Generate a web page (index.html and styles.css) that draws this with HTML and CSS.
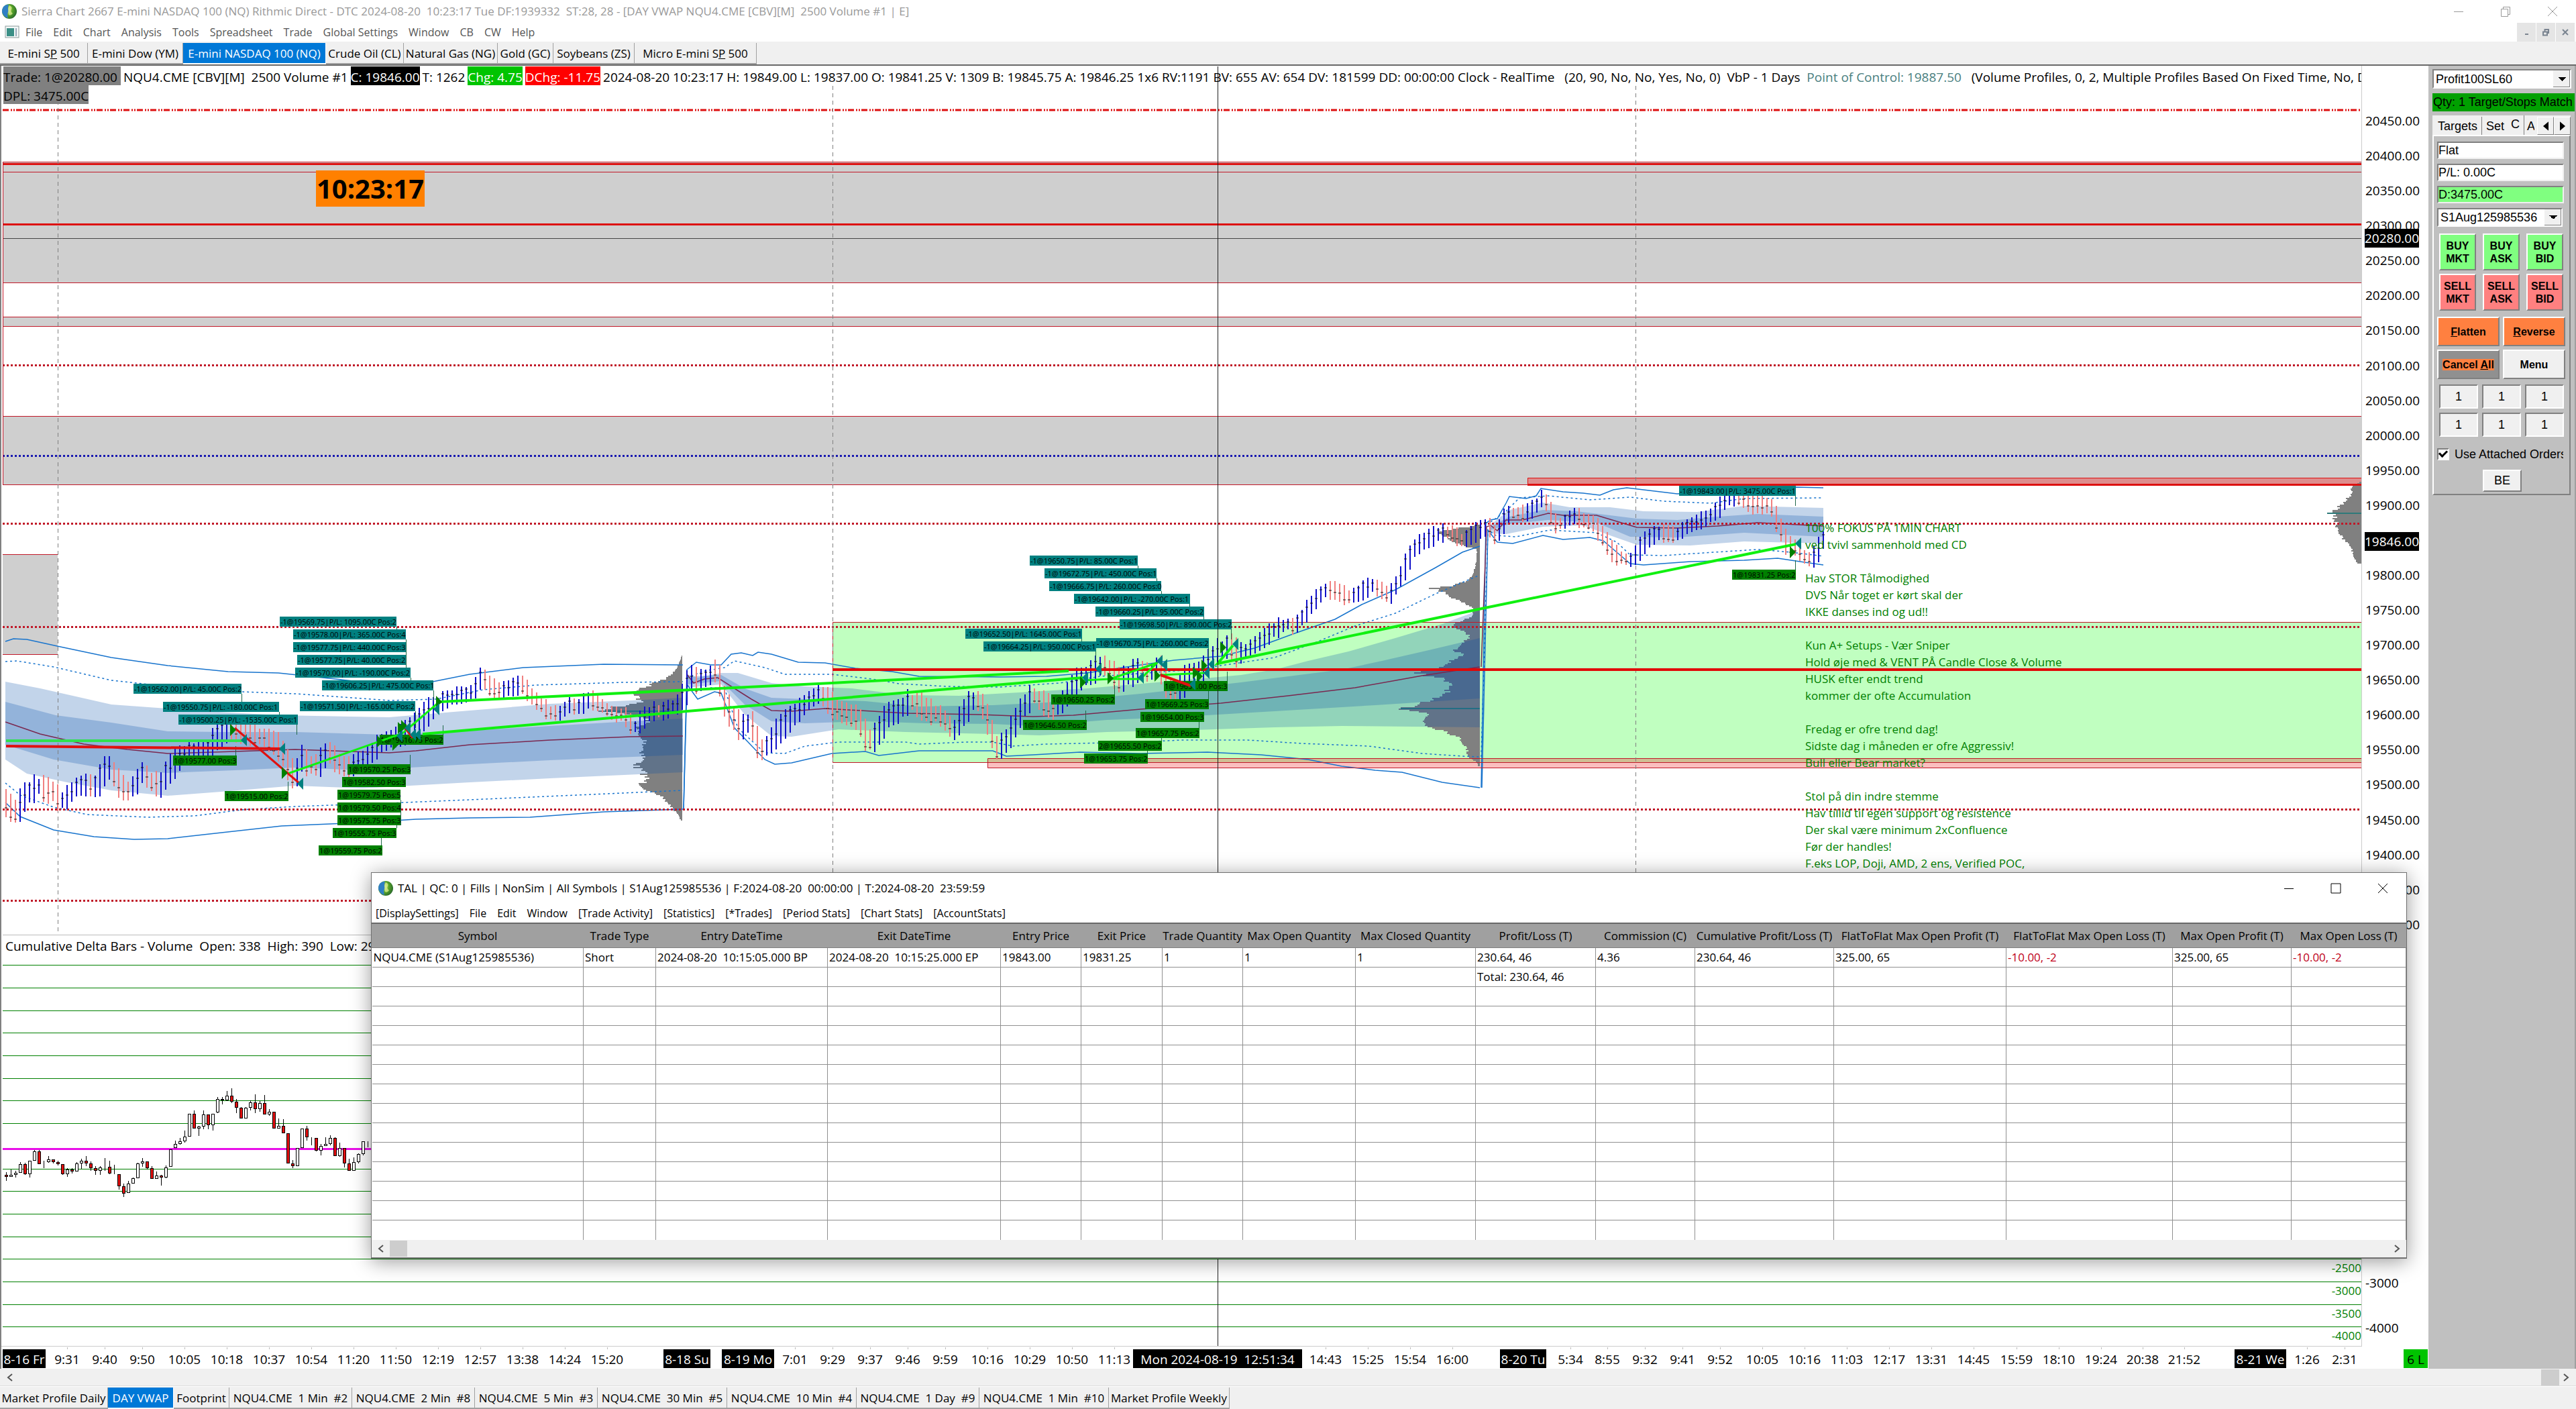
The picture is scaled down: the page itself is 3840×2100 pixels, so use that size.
FILE: index.html
```html
<!DOCTYPE html>
<html lang="en">
<head>
<meta charset="utf-8">
<title>Sierra Chart - DAY VWAP NQU4.CME</title>
<link rel="stylesheet" href="styles.css">
</head>
<body>
<svg class="defs" aria-hidden="true">
  <defs>
    <radialGradient id="ball" cx="35%" cy="40%" r="75%">
      <stop offset="0" stop-color="#d8ee7a"/><stop offset=".5" stop-color="#58a428"/><stop offset="1" stop-color="#1c5a2c"/>
    </radialGradient>
    <symbol id="globe" viewBox="0 0 24 24">
      <circle cx="12" cy="12" r="11" fill="url(#ball)"/>
      <path d="M3 5 Q8 1 11 2 Q9 7 11 11 Q8 16 10 22 Q3 20 1 13 Q1 8 3 5Z" fill="#2f7fc4"/>
      <path d="M12 3 Q17 5 15 9 Q13 12 17 15 Q14 19 11 17 Q9 9 12 3Z" fill="#e6f29a" opacity=".7"/>
    </symbol>
  </defs>
</svg>

<header class="titlebar">
  <svg class="logo"><use href="#globe"/></svg>
  <h1 class="title">Sierra Chart 2667 E-mini NASDAQ 100 (NQ) Rithmic Direct - DTC 2024-08-20  10:23:17 Tue DF:1939332  ST:28, 28 - [DAY VWAP NQU4.CME [CBV][M]  2500 Volume #1 | E]</h1>
  <div class="winbtns faded">
    <button aria-label="Minimize"><svg viewBox="0 0 16 16"><path d="M1 8.5H15"/></svg></button>
    <button aria-label="Restore"><svg viewBox="0 0 16 16"><path d="M1.5 4.5H11.5V15.5H1.5ZM4.5 4V1.5H14.5V12.5H12"/></svg></button>
    <button aria-label="Close"><svg viewBox="0 0 16 16"><path d="M1 1L15 15M15 1L1 15"/></svg></button>
  </div>
</header>

<nav class="menubar">
  <svg class="docicon" viewBox="0 0 22 20"><rect x="1" y="1" width="20" height="17" fill="#f4f8f8" stroke="#8a9a9a"/><rect x="3" y="4" width="11" height="12" fill="#3b8f86"/><path d="M17 4V16" stroke="#9ab" stroke-width="2"/></svg>
  <div class="menu">
    <button>File</button><button>Edit</button><button>Chart</button><button>Analysis</button><button>Tools</button><button>Spreadsheet</button><button>Trade</button><button>Global Settings</button><button>Window</button><button>CB</button><button>CW</button><button>Help</button>
  </div>
  <div class="mdibtns">
    <button aria-label="Minimize chart"><svg viewBox="0 0 12 12"><path d="M4 9H9"/></svg></button>
    <button aria-label="Restore chart"><svg viewBox="0 0 12 12"><path d="M2 5.500H8V10.500H2ZM4.500 5V2H10V7H8"/></svg></button>
    <button aria-label="Close chart"><svg viewBox="0 0 12 12"><path d="M2 2L10 10M10 2L2 10"/></svg></button>
  </div>
</nav>

<nav class="tabs top">
  <button class="w131">E-mini S<u>P</u> 500</button><button class="w142">E-mini Dow (YM)</button><button class="w213 on">E-mini NASDAQ 100 (NQ)</button><button class="w116">Crude Oil (CL)</button><button class="w140">Natural Gas (NG)</button><button class="w83">Gold (GC)</button><button class="w121">Soybeans (ZS)</button><button class="w182">Micro E-mini S<u>P</u> 500</button>
</nav>

<main class="work">
  <section class="chart">
    <div class="plot">
      <svg id="plot" class="canvas"></svg>
      <div class="quote">
        <span class="tag grey">Trade: 1@20280.00 </span><span>NQU4.CME [CBV][M]  2500 Volume #1</span><span class="tag black">C: 19846.00</span><span>T: 1262</span><span class="tag green">Chg: 4.75</span><span class="tag red">DChg: -11.75</span><span>2024-08-20 10:23:17 H: 19849.00 L: 19837.00 O: 19841.25 V: 1309 B: 19845.75 A: 19846.25 1x6 RV:1191 BV: 655 AV: 654 DV: 181599 DD: 00:00:00 Clock - RealTime   (20, 90, No, No, Yes, No, 0)  VbP - 1 Days  <span class="poc">Point of Control: 19887.50</span>   (Volume Profiles, 0, 2, Multiple Profiles Based On Fixed Time, No, Days)</span>
      </div>
      <div class="quote"><span class="tag grey">DPL: 3475.00C</span></div>
      <time class="clock">10:23:17</time>
      <p class="notes">100% FOKUS PÅ 1MIN CHART
ved tvivl sammenhold med CD

Hav STOR Tålmodighed
DVS Når toget er kørt skal der
IKKE danses ind og ud!!

Kun A+ Setups - Vær Sniper
Hold øje med &amp; VENT PÅ Candle Close &amp; Volume
HUSK efter endt trend
kommer der ofte Accumulation

Fredag er ofre trend dag!
Sidste dag i måneden er ofre Aggressiv!
Bull eller Bear market?

Stol på din indre stemme
Hav tillid til egen support og resistence
Der skal være minimum 2xConfluence
Før der handles!
F.eks LOP, Doji, AMD, 2 ens, Verified POC,</p>
      <p class="study">Cumulative Delta Bars - Volume  Open: 338  High: 390  Low: 296</p>
    </div>
    <div class="axis">
      <ul class="prices"><li>20450.00</li><li>20400.00</li><li>20350.00</li><li>20300.00</li><li>20250.00</li><li>20200.00</li><li>20150.00</li><li>20100.00</li><li>20050.00</li><li>20000.00</li><li>19950.00</li><li>19900.00</li><li>19850.00</li><li>19800.00</li><li>19750.00</li><li>19700.00</li><li>19650.00</li><li>19600.00</li><li>19550.00</li><li>19500.00</li><li>19450.00</li><li>19400.00</li><li>19350.00</li><li>19300.00</li></ul>
      <ul class="deltas"><li>-3000</li><li>-4000</li></ul>
      <span class="mark cursor">20280.00</span>
      <span class="mark last">19846.00</span>
    </div>
    <svg id="times" class="times"></svg>
  </section>

  <aside class="panel">
    <select class="combo" aria-label="Trade configuration"><option>Profit100SL60</option></select>
    <div class="match">Qty: 1 Target/Stops Match</div>
    <div class="ptabs">
      <button>Targets</button><button>Set</button><button class="on">C</button><button class="cut">A</button><button class="arrow" aria-label="Previous"><svg viewBox="0 0 10 12"><path d="M8 1V11L2 6Z"/></svg></button><button class="arrow" aria-label="Next"><svg viewBox="0 0 10 12"><path d="M2 1V11L8 6Z"/></svg></button>
    </div>
    <form class="ticket">
      <input class="field" aria-label="Position" value="Flat">
      <input class="field" aria-label="Profit or loss" value="P/L: 0.00C">
      <input class="field day" aria-label="Daily profit or loss" value="D:3475.00C">
      <select class="combo" aria-label="Account"><option>S1Aug125985536</option></select>
      <div class="three orders">
        <button type="button" class="buy">BUY<br>MKT</button><button type="button" class="buy">BUY<br>ASK</button><button type="button" class="buy">BUY<br>BID</button>
        <button type="button" class="sell">SELL<br>MKT</button><button type="button" class="sell">SELL<br>ASK</button><button type="button" class="sell">SELL<br>BID</button>
      </div>
      <div class="two">
        <button type="button" class="orange"><span><u>F</u>latten</span></button><button type="button" class="orange"><span><u>R</u>everse</span></button>
        <button type="button" class="cancel"><span>Cancel <u>A</u>ll</span></button><button type="button">Menu</button>
      </div>
      <div class="three qty">
        <input aria-label="Quantity 1" value="1"><input aria-label="Quantity 2" value="1"><input aria-label="Quantity 3" value="1">
        <input aria-label="Quantity 4" value="1"><input aria-label="Quantity 5" value="1"><input aria-label="Quantity 6" value="1">
      </div>
      <label class="attach"><input type="checkbox" checked>Use Attached Orders</label>
      <button type="button" class="be">BE</button>
    </form>
  </aside>
</main>

<div class="hscroll"><svg viewBox="0 0 12 14"><path d="M9 2L3 7L9 12"/></svg><i class="thumb"></i><svg viewBox="0 0 12 14"><path d="M3 2L9 7L3 12"/></svg></div>

<nav class="tabs bottom">
  <button class="w161">Market Profile Daily</button><button class="w98 on">DAY VWAP</button><button class="w83">Footprint</button><button class="w183">NQU4.CME  1 Min  #2</button><button class="w183">NQU4.CME  2 Min  #8</button><button class="w183">NQU4.CME  5 Min  #3</button><button class="w193">NQU4.CME  30 Min  #5</button><button class="w193">NQU4.CME  10 Min  #4</button><button class="w183">NQU4.CME  1 Day  #9</button><button class="w193">NQU4.CME  1 Min  #10</button><button class="w180">Market Profile Weekly</button>
</nav>

<section class="dialog" role="dialog" aria-label="Trade Activity Log">
  <header class="dtitle">
    <svg class="logo"><use href="#globe"/></svg>
    <h2 class="title">TAL | QC: 0 | Fills | NonSim | All Symbols | S1Aug125985536 | F:2024-08-20  00:00:00 | T:2024-08-20  23:59:59</h2>
    <div class="winbtns">
      <button aria-label="Minimize log"><svg viewBox="0 0 16 16"><path d="M1 8.500H15"/></svg></button>
      <button aria-label="Maximize log"><svg viewBox="0 0 16 16"><path d="M1 1H15V15H1Z"/></svg></button>
      <button aria-label="Close log"><svg viewBox="0 0 16 16"><path d="M1 1L15 15M15 1L1 15"/></svg></button>
    </div>
  </header>
  <nav class="menu dmenu">
    <button>[DisplaySettings]</button><button>File</button><button>Edit</button><button>Window</button><button>[Trade Activity]</button><button>[Statistics]</button><button>[*Trades]</button><button>[Period Stats]</button><button>[Chart Stats]</button><button>[AccountStats]</button>
  </nav>
  <table class="log">
    <colgroup><col class="c315"><col class="c108"><col class="c256"><col class="c258"><col class="c120"><col class="c121"><col class="c120"><col class="c168"><col class="c179"><col class="c179"><col class="c148"><col class="c207"><col class="c257"><col class="c248"><col class="c177"><col></colgroup>
    <thead><tr><th>Symbol</th><th>Trade Type</th><th>Entry DateTime</th><th>Exit DateTime</th><th>Entry Price</th><th>Exit Price</th><th>Trade Quantity</th><th>Max Open Quantity</th><th>Max Closed Quantity</th><th>Profit/Loss (T)</th><th>Commission (C)</th><th>Cumulative Profit/Loss (T)</th><th>FlatToFlat Max Open Profit (T)</th><th>FlatToFlat Max Open Loss (T)</th><th>Max Open Profit (T)</th><th>Max Open Loss (T)</th></tr></thead>
    <tbody id="rows">
      <tr><td>NQU4.CME (S1Aug125985536)</td><td>Short</td><td>2024-08-20  10:15:05.000 BP</td><td>2024-08-20  10:15:25.000 EP</td><td>19843.00</td><td>19831.25</td><td>1</td><td>1</td><td>1</td><td>230.64, 46</td><td>4.36</td><td>230.64, 46</td><td>325.00, 65</td><td class="neg">-10.00, -2</td><td>325.00, 65</td><td class="neg">-10.00, -2</td></tr>
      <tr><td></td><td></td><td></td><td></td><td></td><td></td><td></td><td></td><td></td><td>Total: 230.64, 46</td><td></td><td></td><td></td><td></td><td></td><td></td></tr>
    </tbody>
  </table>
  <div class="dscroll"><svg viewBox="0 0 12 14"><path d="M9 2L3 7L9 12"/></svg><i class="thumb"></i><svg class="end" viewBox="0 0 12 14"><path d="M3 2L9 7L3 12"/></svg></div>
</section>
<script src="chart.js"></script>
</body>
</html>
```
FILE: styles.css
```css
* { box-sizing: border-box; }
body {
  margin: 0; height: 100vh; position: relative; overflow: hidden;
  display: flex; flex-direction: column; background: #f0f0f0; color: #000;
  font: 17px/24px "Open Sans", "Noto Sans", sans-serif;
}
button, input, select { font: inherit; color: inherit; margin: 0; padding: 0; border: 0; background: none; border-radius: 0; }
h1, h2, p, ul { margin: 0; padding: 0; font-size: inherit; font-weight: 400; list-style: none; }
.defs { position: absolute; width: 0; height: 0; }
.logo { width: 24px; height: 24px; }
.title { white-space: pre; flex: 1; }

.titlebar { height: 34px; background: #fff; display: flex; align-items: center; gap: 6px; padding-left: 2px; color: #999; }
.winbtns { display: flex; }
.winbtns button { width: 70px; height: 30px; display: grid; place-items: center; }
.winbtns svg { width: 16px; height: 16px; fill: none; stroke: #000; stroke-width: 1; }
.faded svg { stroke: #999; }
.menubar { height: 28px; background: #fff; display: flex; align-items: center; gap: 9px; padding-left: 7px; color: #555; }
.docicon { width: 22px; height: 20px; }
.menu { display: flex; gap: 16px; white-space: nowrap; flex: 1; font-size: 16px; line-height: 26px; }
.mdibtns { display: flex; gap: 1px; padding-right: 2px; }
.mdibtns button { width: 28px; height: 28px; background: #e5e5e5; display: grid; place-items: center; }
.mdibtns svg { width: 12px; height: 12px; fill: none; stroke: #7a8490; stroke-width: 2; }

.tabs { display: flex; background: #f0f0f0; }
.tabs button { white-space: pre; text-align: center; border-right: 1px solid #a0a0a0; border-bottom: 2px solid #a0a0a0; padding-top: 2px; overflow: hidden; }
.tabs .on { background: #0078d7; color: #fff; border-color: #fff; }
.top { height: 36px; padding-top: 2px; border-bottom: 2px solid #696969; }
.bottom { height: 34px; padding-top: 1px; border-top: 1px solid #fff; }
.w83 { width: 83px; } .w98 { width: 98px; } .w116 { width: 116px; } .w121 { width: 121px; }
.w131 { width: 131px; } .w140 { width: 140px; } .w142 { width: 142px; } .w161 { width: 161px; }
.w180 { width: 180px; } .w182 { width: 182px; } .w183 { width: 183px; } .w193 { width: 193px; } .w213 { width: 213px; }

.work { flex: 1; display: flex; min-height: 0; }
.chart { flex: 1; min-width: 0; background: #fff; display: grid; grid-template-columns: minmax(0, 1fr) 99px; grid-template-rows: minmax(0, 1fr) 33px; border-left: 2px solid #808080; font-size: 19px; line-height: 28px; }
.plot { position: relative; overflow: hidden; border-right: 1px solid #ccc; border-bottom: 1px solid #ccc; padding-top: 1px; }
.canvas { position: absolute; left: 0; top: 0; width: 100%; height: 100%; }
.canvas text { font-size: 11px; }
.canvas .scale { font-size: 17px; fill: #008000; text-anchor: end; }
.quote { position: relative; display: flex; gap: 4px; height: 28px; line-height: 32px; padding-left: 3px; white-space: pre; overflow: hidden; }
.quote > span { flex: none; }
.quote .poc { color: #4a8080; }
.tag { color: #fff; }
.tag.grey { background: #808080; color: #000; }
.tag.black { background: #000; }
.tag.green { background: #00c400; }
.tag.red { background: #f00; }
.clock { position: absolute; left: 469px; top: 156px; width: 162px; background: #ff8000; font-size: 40px; line-height: 54px; font-weight: 700; text-align: center; }
.notes { position: absolute; left: 2689px; top: 676px; color: #008000; white-space: pre; font-size: 17px; line-height: 25px; }
.study { position: absolute; left: 6px; top: 1298px; white-space: pre; }
.axis { position: relative; display: grid; grid-template-rows: minmax(0, 1294fr) minmax(0, 615fr); background: #fff; padding-left: 5px; }
.prices { padding-top: 68px; display: flex; flex-direction: column; justify-content: space-between; }
.deltas { display: flex; flex-direction: column; justify-content: flex-end; gap: 39px; padding-bottom: 14px; }
.mark { position: absolute; left: 4px; background: #000; color: #fff; }
.cursor { top: 243px; }
.last { top: 695px; }
.times { grid-column: 1 / 3; width: 100%; height: 100%; }
.times text { text-anchor: middle; }

.panel { width: 220px; background: #c0c0c0; padding: 5px 6px; font: 18px/24px "Liberation Sans", Arial, sans-serif; border-right: 2px solid #a0a0a0; }
.combo {
  display: block; width: 207px; height: 29px; padding-left: 3px; appearance: none;
  border: 2px solid; border-color: #808080 #fff #fff #808080;
  background-color: #fff; background-repeat: no-repeat;
  background-image: linear-gradient(to top right, #f0f0f0 50%, #0000 50%), linear-gradient(to top left, #f0f0f0 50%, #0000 50%), linear-gradient(#000, #000), linear-gradient(#808080, #808080), linear-gradient(#808080, #808080), linear-gradient(#f0f0f0, #f0f0f0);
  background-size: 6px 6px, 6px 6px, 12px 6px, 1px 25px, 25px 1px, 25px 25px;
  background-position: right 12px center, right 6px center, right 6px center, right, right bottom, right;
}
.match { width: 212px; height: 27px; margin: 7px 0 6px; background: #00a000; line-height: 26px; white-space: nowrap; overflow: hidden; padding-left: 1px; }
.ptabs { display: flex; height: 29px; width: 206px; padding-top: 2px; background: #f0f0f0; align-items: flex-end; }
.ptabs button { height: 27px; background: #f0f0f0; border-right: 1px solid #808080; padding: 0 6px 0 8px; flex: none; }
.ptabs button:nth-child(2) { padding: 0 4px 0 6px; border: 0; }
.ptabs .on { height: 29px; padding: 0 6px 4px; }
.ptabs .cut { width: 15px; padding: 0 0 0 4px; overflow: hidden; border: 0; }
.ptabs .arrow { width: 25px; padding: 0; border: 1px solid; border-color: #fff #808080 #808080 #fff; display: grid; place-items: center; }
.ptabs .cut + .arrow { margin-left: auto; }
.arrow svg { width: 14px; height: 16px; }
.ticket { width: 206px; padding: 8px 7px 0 5px; border: 2px solid; border-color: #fff #808080 #808080 #fff; display: flex; flex-direction: column; gap: 7px; height: 537px; }
.field { width: 189px; height: 26px; background: #fff; border: 2px solid; border-color: #808080 #f0f0f0 #f0f0f0 #808080; flex: none; }
.field.day { background: #80ff80; }
.ticket .combo { width: 187px; height: 28px; flex: none; }
.ticket button { border: 2px solid; border-color: #fff #808080 #808080 #fff; background: #f0f0f0; font-size: 16px; line-height: 19px; font-weight: 700; }
.three { display: grid; grid-template-columns: repeat(3, 55px); column-gap: 10px; row-gap: 5px; padding: 3px 0 2px 3px; }
.orders button { height: 55px; }
.ticket .buy { background: #80ff80; }
.ticket .sell { background: #ff8080; }
.two { display: grid; grid-template-columns: 93px 93px; gap: 5px; }
.two button { height: 44px; }
.ticket .orange { background: #ff8040; }
.ticket .cancel { background: #909090; padding: 0; white-space: nowrap; }
.cancel span { background: #ff8040; }
.qty { grid-template-columns: repeat(3, 58px); column-gap: 6px; row-gap: 6px; padding: 1px 0 2px 3px; }
.qty input { width: 58px; height: 36px; background: #f0f0f0; text-align: center; border: 2px solid; border-color: #808080 #fff #fff #808080; }
.attach { display: flex; align-items: center; gap: 8px; white-space: nowrap; overflow: hidden; width: 188px; margin-top: 5px; flex: none; }
.attach input { appearance: none; width: 18px; height: 18px; background: #fff; border: 2px solid; border-color: #808080 #fff #fff #808080; flex: none; display: grid; place-items: center; }
.attach input::before { content: ""; width: 9px; height: 5px; border: solid #000; border-width: 0 0 3px 3px; rotate: -45deg; margin-bottom: 4px; }
.ticket .be { width: 58px; height: 33px; margin-left: 68px; font-weight: 400; font-size: 18px; flex: none; margin-top: 4px; }

.hscroll { height: 26px; display: flex; align-items: center; gap: 4px; padding: 0 9px; border-bottom: 1px solid #ddd; }
.hscroll svg, .dscroll svg { width: 12px; height: 14px; fill: none; stroke: #555; stroke-width: 2; }
.hscroll .thumb { width: 27px; height: 24px; margin-left: auto; background: #cdcdcd; }

.dialog { position: absolute; left: 553px; right: 252px; top: 1300px; background: #fff; border: 1px solid #707070; box-shadow: 0 4px 28px rgba(0, 0, 0, .4); border-bottom-width: 2px; }
.dtitle { height: 46px; display: flex; align-items: center; gap: 6px; padding-left: 9px; }
.dmenu { height: 30px; padding-left: 6px; align-items: center; border-bottom: 2px solid #696969; }
.log { width: 100%; table-layout: fixed; border-collapse: collapse; border-top: 1px solid #fff; }
.log th { background: #a0a0a0; height: 35px; font-weight: 400; padding: 0; white-space: nowrap; border: 1px solid #a0a0a0; border-bottom-color: #808080; }
.log td { height: 29px; line-height: 26px; padding: 0 0 0 2px; white-space: pre; border: 1px solid #909090; border-left: 0; }
.log tr:last-child td { border-bottom: 0; }
.log .neg { color: #c00018; }
.c108 { width: 108px; } .c120 { width: 120px; } .c121 { width: 121px; } .c148 { width: 148px; } .c168 { width: 168px; }
.c177 { width: 177px; } .c179 { width: 179px; } .c207 { width: 207px; } .c248 { width: 248px; } .c256 { width: 256px; }
.c257 { width: 257px; } .c258 { width: 258px; } .c315 { width: 315px; }
.dscroll { height: 26px; background: #f0f0f0; display: flex; align-items: center; gap: 7px; padding: 0 8px; }
.dscroll .thumb { width: 26px; height: 24px; background: #cdcdcd; }
.dscroll .end { margin-left: auto; }
```
FILE: chart.js
```js
const NS = "http://www.w3.org/2000/svg";
const FAR = 5000;

function surface(id, dx, dy) {
  const g = document.createElementNS(NS, "g");
  g.setAttribute("transform", `translate(${dx},${dy})`);
  document.getElementById(id).append(g);
  return (tag, attrs, text) => {
    const e = document.createElementNS(NS, tag);
    for (const k in attrs) e.setAttribute(k, attrs[k]);
    if (text !== undefined) e.textContent = text;
    g.append(e);
    return e;
  };
}
const draw = surface("plot", -2, -98);
const pts = a => a.map(p => p.join(" ")).join(" L");
const line = (a, stroke, width = 1, dash) =>
  draw("path", { d: "M" + pts(a), fill: "none", stroke, "stroke-width": width, ...(dash && { "stroke-dasharray": dash }) });
const hline = (y, stroke, width = 1, dash, x = 4) => line([[x, y], [FAR, y]], stroke, width, dash);
const box = (x, y, w, h, fill) => draw("rect", { x, y, width: w, height: h, fill });
const parse = s => s.trim().split(/\s+/).map(p => p.split(",").map(Number));
function at(keys, x) {
  for (let i = 1; i < keys.length; i++)
    if (x <= keys[i][0]) {
      const [a, b] = [keys[i - 1], keys[i]];
      return a[1] + (b[1] - a[1]) * (x - a[0]) / (b[0] - a[0]);
    }
  return keys[keys.length - 1][1];
}
let seed = 7;
const noise = () => (seed = (seed * 16807) % 2147483647) / 2147483647;

/* volume profiles, each row reaching left from its right edge */
function profile(right, keys, poc) {
  const k = parse(keys), end = k[k.length - 1][0];
  let d = `M${right} ${k[0][0]}`;
  for (let y = k[0][0]; y < end; y += 2) d += `H${Math.round(right - at(k, y) * (0.86 + noise() * 0.22))}v2`;
  draw("path", { d: d + `H${right}Z`, fill: "#808080" });
  if (poc) box(right - poc[1], poc[0], poc[1], 2, "#2f7a7a");
}

/* supply and demand zones */
box(4, 241, FAR, 180, "#cfcfcf");
box(4, 472, FAR, 14, "#cfcfcf");
box(4, 620, FAR, 102, "#cfcfcf");
box(4, 826, 82, 149, "#cfcfcf");
box(1242, 927, FAR, 210, "#c0ffc0");
box(1472, 1130, FAR, 15, "rgba(240,60,60,.33)");
box(2277, 712, FAR, 10, "rgba(240,60,60,.45)");

profile(1017, "977,1 995,8 1003,15 1010,25 1020,50 1030,70 1045,65 1053,100 1060,122 1065,75 1072,50 1085,70 1094,70 1105,55 1115,60 1130,60 1142,72 1150,60 1160,55 1168,62 1180,50 1188,30 1200,18 1215,5 1223,2", [1059, 115]);
profile(2206, "782,5 793,72 800,50 810,35 818,5 835,5 855,10 865,20 872,40 876,72 885,50 893,35 905,10 918,12 925,30 932,45 940,22 950,15 958,30 968,40 975,25 982,40 990,50 1003,95 1010,60 1020,45 1030,50 1040,75 1050,90 1055,118 1062,80 1070,85 1080,80 1090,50 1100,30 1115,20 1127,18 1135,4 1142,2", [1055, 118]);
profile(3520, "718,3 725,15 735,14 745,25 755,35 763,44 770,42 780,38 790,34 800,31 808,22 815,15 828,12 840,5", [764, 51]);

/* VWAP with deviation bands, one set per session */
const sessions = [{
  solidUp: "8,956 20,952 40,953 90,964 166,980 250,992 340,1001 415,1003 500,1012 580,1021 640,1017 700,1005 780,995 900,990 1018,991",
  dotUp: "8,986 25,985 80,994 166,1014 250,1023 360,1031 440,1034 580,1044 650,1042 720,1028 800,1021 930,1017 1018,1016",
  outUp: "8,1016 60,1026 166,1050 290,1059 415,1066 580,1069 700,1059 820,1049 940,1044 1018,1040",
  inUp: "8,1046 83,1066 166,1077 250,1090 330,1091 440,1091 580,1095 700,1089 820,1082 940,1075 1018,1071",
  mid: "8,1076 60,1094 125,1109 190,1117 250,1123 350,1120 440,1117 580,1122 620,1119 700,1110 820,1103 940,1098 1018,1097",
  inLow: "8,1110 80,1132 166,1147 250,1152 350,1148 440,1144 540,1148 700,1139 820,1133 1018,1125",
  outLow: "8,1132 40,1153 100,1166 166,1178 250,1186 330,1180 440,1171 540,1175 700,1166 820,1160 1018,1151",
  dotLow: "8,1167 30,1185 80,1203 130,1214 220,1218 290,1216 360,1207 440,1202 580,1197 700,1192 860,1185 1018,1178",
  solidLow: "8,1196 30,1217 80,1237 140,1247 200,1251 250,1250 330,1241 420,1231 540,1226 620,1221 700,1219 790,1218 900,1210 1018,1206"
}, {
  solidUp: "1019,1206 1024,998 1038,987 1060,991 1075,991 1090,975 1105,973 1122,977 1130,972 1150,975 1190,987 1230,988 1275,996 1330,1001 1370,1008 1490,1009 1560,1008 1620,1003 1680,994 1750,984 1820,978 1870,966 1930,944 1990,923 2030,901 2080,879 2140,846 2180,823 2206,814",
  dotUp: "1024,1010 1050,1000 1080,995 1095,985 1140,995 1170,1005 1240,1005 1300,1012 1340,1019 1410,1023 1490,1024 1580,1018 1640,1008 1780,998 1840,989 1900,980 1960,958 2020,933 2080,914 2140,885 2206,857",
  outUp: "1024,1005 1040,1010 1075,1003 1100,1003 1150,1018 1200,1023 1270,1026 1350,1036 1430,1037 1520,1032 1620,1026 1760,1014 1850,1006 1900,998 1950,985 2010,971 2080,951 2150,930 2206,909",
  inUp: "1024,1008 1075,1006 1110,1026 1150,1040 1200,1042 1290,1045 1370,1053 1480,1051 1560,1047 1700,1034 1850,1017 2000,998 2060,985 2130,969 2206,951",
  mid: "1024,1005 1034,1018 1050,1012 1070,1010 1090,1023 1120,1042 1150,1059 1180,1060 1230,1056 1300,1060 1350,1063 1460,1065 1540,1068 1600,1066 1700,1057 1820,1048 1920,1037 2020,1025 2120,1007 2206,994",
  inLow: "1024,1020 1075,1015 1110,1050 1150,1075 1200,1078 1290,1075 1380,1078 1480,1079 1540,1082 1650,1073 1750,1069 1900,1060 2050,1051 2206,1041",
  outLow: "1024,1025 1075,1020 1110,1065 1150,1097 1180,1098 1250,1087 1350,1091 1480,1094 1550,1096 1650,1091 1780,1088 1900,1084 2000,1082 2206,1084",
  dotLow: "1024,1030 1060,1025 1080,1026 1100,1085 1140,1122 1170,1123 1200,1112 1250,1106 1350,1106 1370,1109 1440,1106 1480,1106 1510,1112 1560,1109 1700,1106 1760,1103 1860,1103 1940,1108 2040,1112 2120,1123 2180,1127 2206,1128",
  solidLow: "1019,1206 1024,1020 1040,1042 1065,1031 1075,1033 1095,1085 1140,1132 1155,1139 1180,1137 1240,1123 1290,1120 1310,1126 1370,1119 1480,1119 1500,1127 1540,1125 1610,1121 1700,1123 1800,1121 1880,1125 1950,1132 2000,1142 2050,1148 2090,1151 2150,1166 2206,1174"
}, {
  solidUp: "2208,1174 2215,780 2222,775 2232,773 2245,750 2250,740 2275,743 2290,739 2297,728 2330,733 2360,735 2385,738 2405,730 2425,727 2450,730 2500,736 2590,731 2677,726 2718,727",
  dotUp: "2222,778 2245,762 2265,742 2308,739 2370,745 2400,743 2430,741 2480,747 2550,750 2600,743 2718,742",
  outUp: "2222,782 2250,760 2300,749 2340,756 2400,756 2450,762 2530,763 2600,754 2640,755 2718,757",
  inUp: "2222,785 2250,770 2300,760 2350,762 2400,768 2440,773 2500,775 2560,770 2620,766 2718,770",
  mid: "2208,994 2216,785 2222,783 2232,791 2245,775 2270,775 2308,765 2330,768 2380,768 2410,777 2440,786 2500,787 2560,784 2620,779 2680,782 2718,784",
  inLow: "2222,790 2250,781 2308,775 2380,779 2430,800 2500,801 2600,794 2718,800",
  outLow: "2222,795 2245,796 2300,785 2360,783 2400,798 2440,812 2520,813 2600,807 2718,810",
  dotLow: "2208,1128 2218,790 2230,798 2260,800 2310,790 2380,794 2410,808 2430,827 2480,828 2540,824 2620,819 2670,823 2718,829",
  solidLow: "2209,1174 2218,790 2232,808 2255,810 2300,798 2330,804 2370,801 2390,806 2410,823 2430,840 2450,842 2520,837 2600,835 2650,832 2690,838 2718,842"
}];
for (const s of sessions) {
  const p = {};
  for (const k in s) p[k] = parse(s[k]);
  const band = "rgba(0,76,167,.24)";
  draw("path", { d: "M" + pts([...p.outUp, ...[...p.outLow].reverse()]) + "Z", fill: band });
  draw("path", { d: "M" + pts([...p.inUp, ...[...p.inLow].reverse()]) + "Z", fill: band });
  line(p.solidUp, "#1874cd", 1.5);
  line(p.solidLow, "#1874cd", 1.5);
  line(p.dotUp, "#1874cd", 1.5, "3 4");
  line(p.dotLow, "#1874cd", 1.5, "3 4");
  line(p.mid, "#7a2850", 1.5);
}

/* zone borders and levels */
const RED = "#dd1010", DARK = "#c01828";
hline(164, RED, 3, "9 3 2 2 2 2");
hline(241.5, DARK);
hline(244.5, RED, 3);
hline(256.5, DARK);
hline(334.5, RED, 3);
hline(355.5, "#444");
hline(421.5, DARK);
hline(472.5, DARK);
hline(486.5, DARK);
hline(544.5, DARK, 3, "3 3");
hline(620.5, DARK);
hline(679.5, "#1818b0", 3, "3 3");
line([[4, 722.5], [2277, 722.5]], DARK);
line([[FAR, 712.5], [2277.5, 712.5], [2277.5, 722]], RED);
hline(722.5, RED, 3, null, 2277);
hline(780.5, DARK, 3, "3 3");
line([[4, 826.5], [86, 826.5]], DARK);
line([[4, 975.5], [86, 975.5]], DARK);
line([[FAR, 927.5], [1241.5, 927.5], [1241.5, 1136.5], [FAR, 1136.5]], DARK);
line([[FAR, 1130.5], [1472.5, 1130.5], [1472.5, 1144.5], [FAR, 1144.5]], DARK);
hline(934.5, DARK, 3, "3 3");
hline(1206.5, DARK, 3, "3 3");
hline(1342.5, DARK, 3, "3 3");
for (const x of [86.5, 1241.5, 2438.5]) line([[x, 128], [x, 1393]], "#808080", 1, "6 5");
line([[4.5, 241], [4.5, 421], [4.5, 472], [4.5, 722]], DARK);

/* price bars */
const path = parse(`9,1197 18,1206 25,1210 35,1190 48,1177 58,1172 70,1177 80,1180 90,1195 100,1188 115,1172 130,1170 145,1172 155,1150 165,1143 175,1165 190,1180 205,1165 213,1150 225,1165 240,1170 250,1150 265,1132 280,1122 295,1120 310,1117 325,1098 340,1088 355,1090 380,1095 395,1100 410,1108 420,1118 428,1138 440,1160 450,1130 460,1140 475,1140 490,1120 505,1138 520,1145 535,1135 550,1128 565,1110 580,1102 600,1095 620,1080 640,1060 660,1045 680,1037 700,1035 712,1022 718,1006 730,1022 745,1030 760,1025 780,1020 790,1035 800,1045 820,1062 835,1063 850,1050 860,1055 880,1042 895,1050 915,1065 930,1065 945,1085 960,1070 975,1060 990,1060 1010,1050 1022,1030 1030,1010 1040,1015 1055,1010 1066,1000 1072,1010 1080,1045 1090,1065 1105,1085 1120,1075 1133,1120 1145,1110 1160,1090 1175,1075 1190,1060 1205,1045 1220,1035 1230,1040 1250,1060 1265,1065 1280,1070 1290,1095 1300,1105 1310,1090 1325,1065 1340,1060 1355,1045 1370,1050 1385,1060 1400,1065 1410,1075 1422,1090 1435,1065 1450,1045 1462,1045 1475,1080 1485,1115 1497,1110 1510,1085 1525,1055 1540,1035 1550,1045 1570,1055 1585,1045 1600,1020 1615,1010 1630,1000 1645,990 1655,1000 1670,1015 1685,1005 1700,998 1715,1003 1728,990 1740,1025 1755,1035 1770,1008 1790,1005 1800,985 1815,970 1835,962 1845,975 1860,968 1880,955 1900,938 1920,930 1930,935 1945,915 1960,895 1975,880 1990,880 2010,890 2025,885 2045,872 2060,880 2072,888 2085,865 2100,835 2110,815 2125,805 2140,798 2155,793 2165,795 2180,806 2195,797 2205,790 2220,785 2230,800 2240,780 2250,765 2262,765 2275,765 2290,755 2300,740 2308,755 2318,780 2330,780 2345,768 2360,775 2375,780 2390,800 2405,825 2420,833 2432,835 2440,825 2455,805 2470,795 2485,795 2500,797 2515,785 2530,778 2545,772 2560,760 2575,745 2590,738 2600,742 2610,752 2625,752 2640,755 2655,790 2665,815 2675,815 2690,830 2700,835 2708,825 2718,805`);
let blue = "", pink = "", ticks = "";
for (let x = 9; x <= 2719; x += 7) {
  const m = at(path, x), slope = at(path, x + 4) - at(path, x - 6);
  const calm = (x > 640 && x < 1015) || x > 1850 ? 0.75 : 1;
  const half = (10 + noise() * 9 + Math.min(9, Math.abs(slope) * 0.4)) * calm;
  const top = Math.round(m - half), bottom = Math.round(m + half), up = slope < 0;
  const bar = `M${x} ${top}V${bottom}`;
  if (up) blue += bar; else pink += bar;
  const close = Math.round(up ? m - half * noise() * 0.8 : m + half * noise() * 0.8);
  ticks += `M${x - 2} ${close}h4`;
}
draw("path", { d: pink, stroke: "#f08080", "stroke-width": 2 });
draw("path", { d: blue, stroke: "#1010c8", "stroke-width": 2 });
draw("path", { d: ticks, stroke: "#101010", "stroke-width": 1 });

hline(998, "#e00808", 4, null, 1241);

/* trade labels: side, left, right, top, text */
const stems = "591,934,591,938 605,953,605,1000 612,1010,612,1014 646,1029,646,1045 360,1034,360,1046 416,1061,416,1065 442,1080,442,1095 619,1060,619,1085 351,1112,351,1126 429,1165,429,1179 660,1081,660,1095 611,1125,611,1139 597,1192,597,1230 591,1230,591,1234 568,1249,568,1260 1696,843,1696,847 1724,862,1724,866 1731,881,1731,885 1773,900,1773,904 1794,919,1794,923 1835,938,1835,953 1612,952,1612,956 1633,971,1633,986 1801,966,1801,980 1661,1021,1661,1035 1618,1059,1618,1073 1829,1001,1829,1015 1801,1028,1801,1042 1787,1076,1787,1085 1731,1100,1731,1104 1710,1119,1710,1123 2676,739,2676,754 2676,835,2676,849";
for (const [a, b, c, d] of parse(stems)) line([[a + .5, b], [c + .5, d]], "#206848", 1);
`s 417 591 919 -1@19569.75|P/L: 1095.00C Pos:2
s 437 605 938 -1@19578.00|P/L: 365.00C Pos:4
s 437 605 957 -1@19577.75|P/L: 440.00C Pos:3
s 443 605 976 -1@19577.75|P/L: 40.00C Pos:2
s 440 612 995 -1@19570.00|P/L: -190.00C Pos:2
s 480 646 1014 -1@19606.25|P/L: 475.00C Pos:1
s 199 360 1019 -1@19562.00|P/L: 45.00C Pos:2
s 243 416 1046 -1@19550.75|P/L: -180.00C Pos:1
s 266 444 1065 -1@19500.25|P/L: -1535.00C Pos:1
s 447 619 1045 -1@19571.50|P/L: -165.00C Pos:2
b 258 353 1126 1@19577.00 Pos:3
b 335 430 1179 1@19515.00 Pos:2
b 566 661 1095 1@19616.75 Pos:2
b 518 612 1139 1@19570.25 Pos:3
b 510 605 1158 1@19582.50 Pos:3
b 503 597 1177 1@19579.75 Pos:5
b 503 597 1196 1@19579.50 Pos:4
b 503 597 1215 1@19575.75 Pos:3
b 496 591 1234 1@19555.75 Pos:3
b 475 570 1260 1@19559.75 Pos:2
s 1535 1696 828 -1@19650.75|P/L: 85.00C Pos:1
s 1557 1724 847 -1@19672.75|P/L: 450.00C Pos:1
s 1564 1731 866 -1@19666.75|P/L: 260.00C Pos:0
s 1601 1774 885 -1@19642.00|P/L: -270.00C Pos:1
s 1633 1795 904 -1@19660.25|P/L: 95.00C Pos:2
s 1669 1836 923 -1@19698.50|P/L: 890.00C Pos:2
s 1439 1613 937 -1@19652.50|P/L: 1645.00C Pos:1
s 1466 1634 956 -1@19664.25|P/L: 950.00C Pos:1
s 1634 1802 951 -1@19670.75|P/L: 260.00C Pos:2
b 1567 1662 1035 1@19650.25 Pos:2
b 1525 1620 1073 1@19646.50 Pos:2
b 1735 1830 1015 1@19651.00 Pos:3
b 1707 1802 1042 1@19669.25 Pos:3
b 1700 1795 1061 1@19654.00 Pos:3
b 1693 1788 1085 1@19657.75 Pos:2
b 1637 1732 1104 2@19655.50 Pos:2
b 1616 1711 1123 1@19653.75 Pos:2
s 2503 2677 724 -1@19843.00|P/L: 3475.00C Pos:1
b 2582 2677 849 1@19831.25 Pos:2`.split("\n").forEach(row => {
  const [side, l, r, t, ...words] = row.split(" ");
  box(+l, +t, r - l, 15, side === "s" ? "#008080" : "#008000");
  draw("text", { x: +l + 1, y: +t + 12 }, words.join(" "));
});

/* trade lines */
line(parse("655,1046 1240,1018 1593,1000"), "#10f010", 4);
line(parse("630,1094 1200,1045 1614,1010"), "#10f010", 4);
line(parse("429,1153 600,1093 655,1046"), "#10f010", 3);
line(parse("9,1104 362,1104"), "#30e050", 4);
line(parse("9,1112 422,1116"), "#e01010", 4);
line(parse("350,1085 447,1168"), "#e01010", 3);
line(parse("604,1085 615,1100"), "#e01010", 3);
line(parse("1614,1014 1655,1012 1700,1012 1725,988 1655,1012"), "#10f010", 3);
line(parse("1730,1006 1795,1003"), "#10f010", 3);
line(parse("1730,1006 1775,1022"), "#e01010", 4);
line(parse("1838,962 1815,989 2209,907 2677,811"), "#10f010", 4);
for (const [x, y] of parse("343,1088 420,1152 650,1046 593,1085 562,1105 585,1110 598,1082 1610,1017 1651,1011 1721,1007 1778,1003 1784,1008 1791,992 1819,965 2668,823"))
  draw("path", { d: `M${x} ${y - 9}l9 9l-9 9Z`, fill: "#008000" });
for (const [x, y] of parse("368,1103 425,1116 452,1168 655,1057 600,1097 612,1085 620,1095 627,1095 1642,997 1622,1010 1705,1010 1733,985 1740,991 1810,990 1803,1003 1846,960 1782,1020 2685,810"))
  draw("path", { d: `M${x} ${y - 9}l-9 9l9 9Z`, fill: "#008080" });

/* cumulative delta pane */
hline(1393.5, "#bbb");
for (const y of [1438, 1472, 1506, 1539, 1573, 1607, 1640, 1674, 1742, 1775, 1809, 1843, 1876, 1910, 1944, 1977]) hline(y + .5, "#008000");
hline(1712.5, "#e810e8", 3);
[[1890, "-2500"], [1924, "-3000"], [1958, "-3500"], [1991, "-4000"]].forEach(([y, t]) => draw("text", { class: "scale", x: 3520, y: y + 6 }, t));
const delta = parse(`808,815,800,827,1 808,815,790,815,0 802,808,795,817,0 773,802,767,802,0 773,805,768,808,1 763,805,763,817,0 732,763,728,763,0 732,773,728,773,1 771,773,762,786,0 758,767,747,768,0 758,767,758,770,1 767,773,762,778,1 773,805,773,808,1 790,805,786,814,0 790,797,786,804,1 771,797,766,797,0 763,771,756,788,0 763,771,747,780,1 771,787,764,795,1 787,796,780,808,1 784,796,780,808,0 781,784,754,796,0 781,804,762,806,1 804,806,775,806,0 806,846,806,857,1 846,870,837,879,1 836,866,827,866,0 820,836,816,836,0 771,820,768,820,0 765,771,754,782,0 765,787,765,790,1 787,822,780,822,1 811,822,798,822,0 811,817,808,842,1 783,817,777,819,0 725,782,725,782,0 707,722,697,722,0 700,707,688,709,0 683,700,665,703,0 609,683,609,683,0 609,657,598,657,1 652,657,648,681,0 611,652,598,659,0 613,646,611,659,1 609,646,609,664,0 563,606,555,608,0 563,566,555,580,0 550,566,535,568,0 550,570,527,576,1 570,591,562,607,1 591,626,588,626,1 591,626,588,626,0 572,591,566,600,0 572,594,547,608,1 574,594,568,604,0 574,611,549,611,1 604,611,594,617,0 604,657,604,657,1 648,657,626,657,0 648,674,628,674,1 674,770,672,770,1 770,779,760,786,1 722,779,722,779,0 657,720,657,720,0 657,687,650,698,1 687,689,687,712,0 689,729,689,732,1 715,729,708,745,0 707,715,685,715,0 689,707,679,713,0 689,748,686,748,1 720,748,703,750,0 720,770,720,783,1 770,794,755,795,1 766,794,752,795,0 741,766,738,770,0 700,741,700,745,0 700,702,700,718,0`);
const dy = v => Math.round(1380 + v / 2.178);
delta.forEach(([t, b, h, l, down], i) => {
  const x = 9.5 + i * 7;
  line([[x, dy(h)], [x, dy(l)]], "#000");
  draw("rect", { x: x - 2, y: dy(t) + .5, width: 4, height: Math.max(0, dy(b) - dy(t) - 1), fill: down ? "#e01010" : "#fff", stroke: "#000" });
});

/* crosshair */
line([[1815.5, 99], [1815.5, 2007]], "#202020");

/* time scale */
const time = surface("times", -2, -2006);
"100 9:31,156 9:40,212 9:50,275 10:05,338 10:18,401 10:37,464 10:54,527 11:20,590 11:50,653 12:19,716 12:57,779 13:38,842 14:24,905 15:20,1185 7:01,1241 9:29,1297 9:37,1353 9:46,1409 9:59,1472 10:16,1535 10:29,1598 10:50,1661 11:13,1976 14:43,2039 15:25,2102 15:54,2165 16:00,2341 5:34,2396 8:55,2452 9:32,2508 9:41,2564 9:52,2627 10:05,2690 10:16,2753 11:03,2816 12:17,2879 13:31,2942 14:45,3006 15:59,3069 18:10,3132 19:24,3194 20:38,3256 21:52,3439 1:26,3495 2:31".split(",").forEach(s => {
  const [x, t] = s.split(" ");
  time("path", { d: `M${x}.5 2007v3`, stroke: "#bbb" });
  time("text", { x, y: 2032 }, t);
});
[[4, 68, "8-16 Fr"], [989, 1059, "8-18 Su"], [1076, 1154, "8-19 Mo"], [1689, 1941, "Mon 2024-08-19  12:51:34"], [2236, 2305, "8-20 Tu"], [3331, 3408, "8-21 We"], [3583, 3619, "6 L"]].forEach(([l, r, t]) => {
  const green = t === "6 L";
  time("rect", { x: l, y: 2010, width: r - l, height: 28, fill: green ? "#00c400" : "#000" });
  time("text", { x: (l + r) / 2, y: 2032, fill: green ? "#000" : "#fff", style: "white-space: pre" }, t);
});

/* empty rows below the fills */
const rows = document.getElementById("rows");
while (rows.children.length < 15) rows.insertRow().append(...Array.from({ length: 16 }, () => document.createElement("td")));
```
